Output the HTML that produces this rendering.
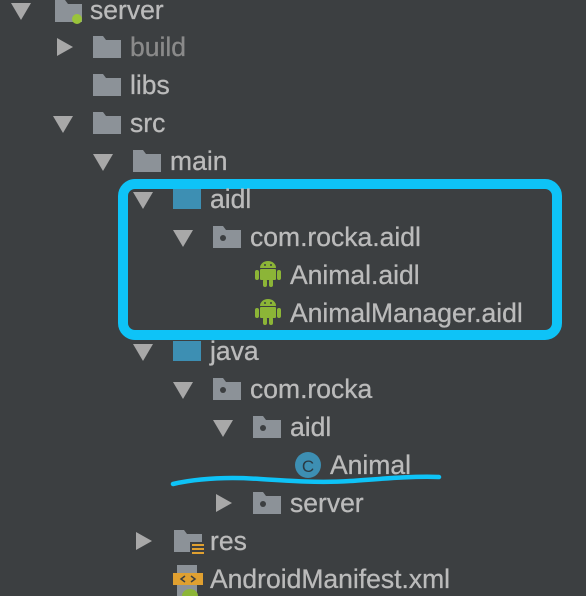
<!DOCTYPE html>
<html><head><style>
body{margin:0;width:586px;height:596px;background:#3c3f41;overflow:hidden;position:relative;font-family:"Liberation Sans",sans-serif}
.t{position:absolute;color:#bbbbbb;font-size:26.5px;line-height:26px;white-space:nowrap;-webkit-text-stroke:0.3px #bbbbbb}
.a{position:absolute;width:0;height:0}
.d{border-left:10px solid transparent;border-right:10px solid transparent;border-top:17px solid #a8a8a8}
.r{border-top:9px solid transparent;border-bottom:9px solid transparent;border-left:16px solid #a8a8a8}
</style></head><body>
<svg width="586" height="596" style="position:absolute;left:0;top:0">
<defs>
<g id="fold"><path d="M0 0h10l3 4h15v18H0z" fill="#8c9298"/></g>
<g id="foldb"><rect x="0" y="0" width="28" height="20" fill="#3d8fb3"/></g>
<g id="pkg"><path d="M0 0h10l3 4h15v18H0z" fill="#8c9298"/><circle cx="10" cy="12" r="3" fill="#3c3f41"/></g>
<g id="and"><rect x="5" y="7" width="16" height="11" rx="1" fill="#8cb537"/><path d="M5 6a8 7 0 0 1 16 0z" fill="#8cb537"/><rect x="0" y="8" width="4" height="10" rx="2" fill="#8cb537"/><rect x="22" y="8" width="4" height="10" rx="2" fill="#8cb537"/><rect x="8" y="17" width="4" height="8" rx="2" fill="#8cb537"/><rect x="14" y="17" width="4" height="8" rx="2" fill="#8cb537"/><circle cx="10" cy="3" r="1" fill="#3c3f41"/><circle cx="16" cy="3" r="1" fill="#3c3f41"/></g>
</defs>
<path d="M55 0h10l3 4h14v18H55z" fill="#8c9298"/><circle cx="77" cy="19" r="5" fill="#9ac43a"/>
<use href="#fold" x="93" y="36"/>
<use href="#fold" x="93" y="74"/>
<use href="#fold" x="93" y="112"/>
<use href="#fold" x="133" y="150"/>
<use href="#foldb" x="173" y="189"/>
<use href="#pkg" x="213" y="226"/>
<use href="#and" x="255" y="262"/>
<use href="#and" x="255" y="300"/>
<use href="#foldb" x="173" y="341"/>
<use href="#pkg" x="213" y="378"/>
<use href="#pkg" x="253" y="416"/>
<circle cx="308" cy="465" r="13" fill="#3d8fb3"/><text x="308" y="472" font-size="17" fill="#2a3a44" text-anchor="middle" font-family="Liberation Sans">C</text>
<use href="#pkg" x="253" y="492"/>
<path d="M174 530h10l3 4h15v18H174z" fill="#8c9298"/><rect x="190" y="542" width="14" height="14" fill="#3c3f41"/><g fill="#e0a030"><rect x="192" y="544" width="12" height="2"/><rect x="192" y="548" width="12" height="2"/><rect x="192" y="552" width="12" height="2"/></g>
<rect x="177" y="565" width="20" height="31" fill="#8c9298"/><rect x="173" y="573" width="30" height="12" fill="#e0a030"/><path d="M185 576l-4 3 4 3M191 576l4 3-4 3" stroke="#3c3f41" stroke-width="1.5" fill="none"/><path d="M182 596a8 7 0 0 1 16 0z" fill="#8cb537"/>
<rect x="123" y="184" width="434" height="151" rx="12" fill="none" stroke="#0ec3f7" stroke-width="10"/>
<path d="M173 484C200 478 230 477 260 479S320 483 350 481 410 476 439 477" stroke="#0ec3f7" stroke-width="4.5" fill="none" stroke-linecap="round"/>
</svg>
<div class="a d" style="left:11px;top:3px"></div>
<div class="a r" style="left:57px;top:38px"></div>
<div class="a d" style="left:53px;top:116px"></div>
<div class="a d" style="left:93px;top:154px"></div>
<div class="a d" style="left:133px;top:192px"></div>
<div class="a d" style="left:173px;top:230px"></div>
<div class="a d" style="left:133px;top:344px"></div>
<div class="a d" style="left:173px;top:382px"></div>
<div class="a d" style="left:213px;top:420px"></div>
<div class="a r" style="left:216px;top:494px"></div>
<div class="a r" style="left:136px;top:532px"></div>
<div class="t" style="left:90px;top:-3px">server</div>
<div class="t" style="left:130px;top:34px;color:#8a8a8a;-webkit-text-stroke:0.3px #8a8a8a">build</div>
<div class="t" style="left:130px;top:72px">libs</div>
<div class="t" style="left:130px;top:110px">src</div>
<div class="t" style="left:170px;top:148px">main</div>
<div class="t" style="left:210px;top:186px">aidl</div>
<div class="t" style="left:250px;top:224px">com.rocka.aidl</div>
<div class="t" style="left:290px;top:262px">Animal.aidl</div>
<div class="t" style="left:290px;top:300px">AnimalManager.aidl</div>
<div class="t" style="left:210px;top:338px">java</div>
<div class="t" style="left:250px;top:376px">com.rocka</div>
<div class="t" style="left:290px;top:414px">aidl</div>
<div class="t" style="left:330px;top:452px">Animal</div>
<div class="t" style="left:290px;top:490px">server</div>
<div class="t" style="left:210px;top:528px">res</div>
<div class="t" style="left:210px;top:566px">AndroidManifest.xml</div>
</body></html>
